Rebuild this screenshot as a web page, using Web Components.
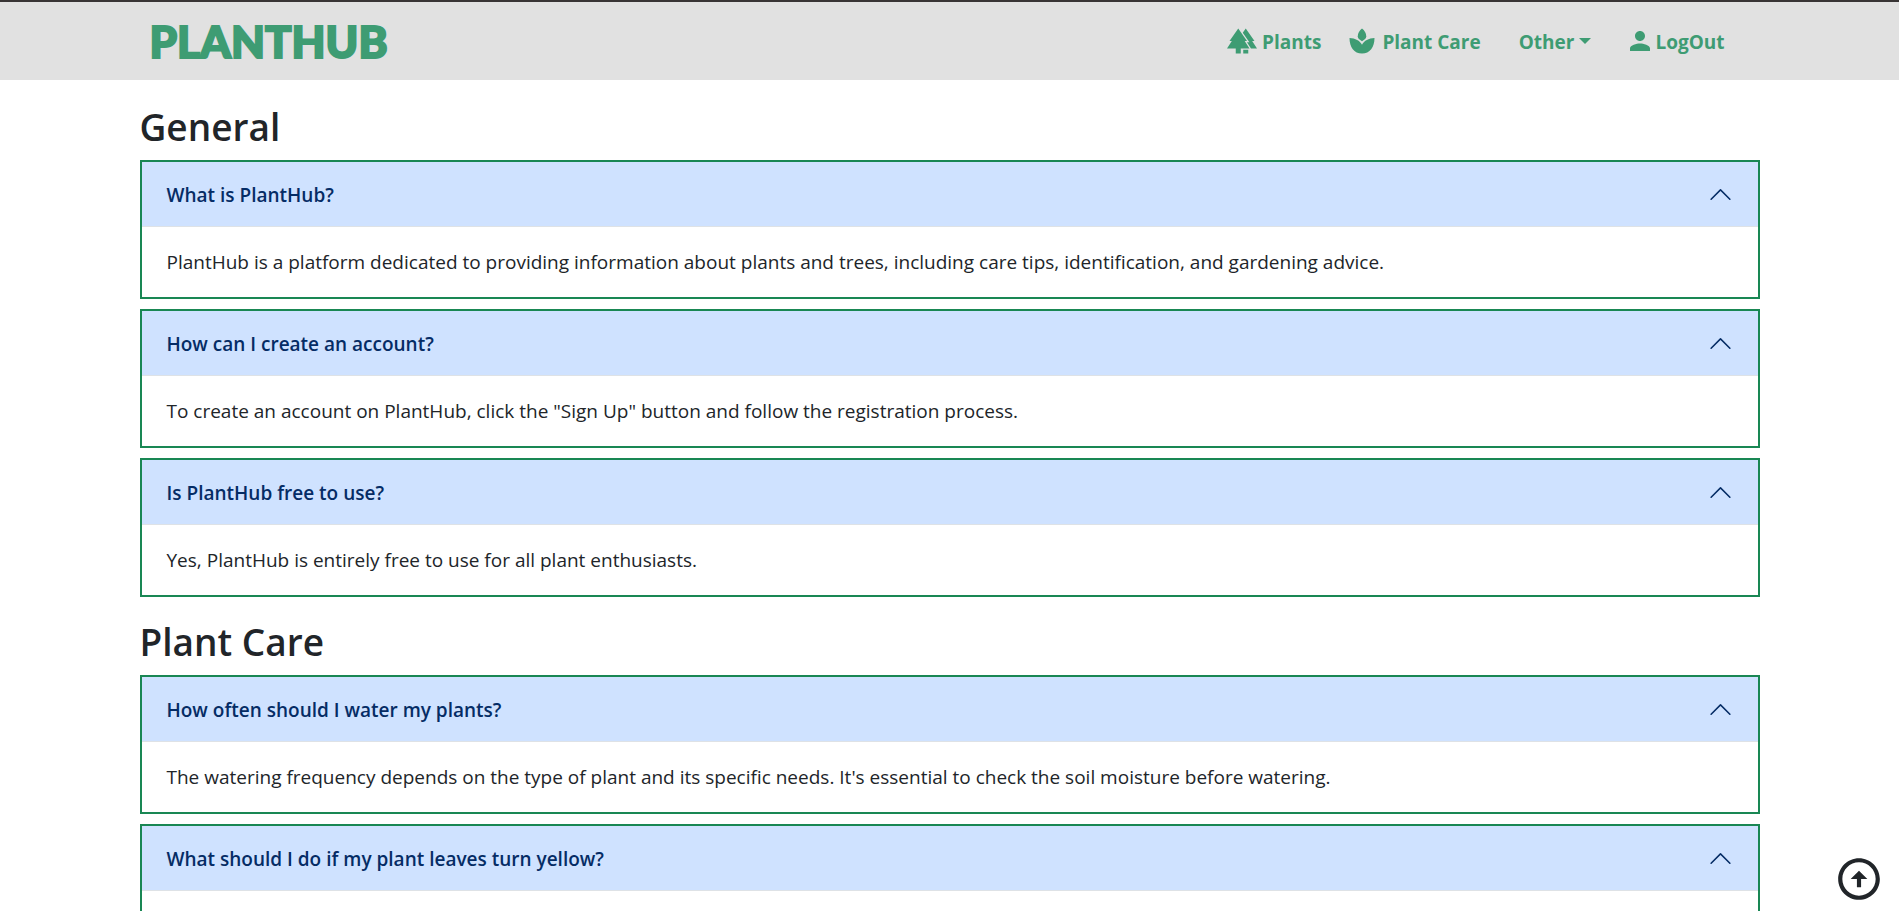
<!DOCTYPE html>
<html lang="en">
<head>
<meta charset="utf-8">
<meta name="viewport" content="width=device-width, initial-scale=1">
<title>PlantHub FAQ</title>
<style>
  body { margin: 0; background: #fff; color: #212529; font: 19px/30px "Open Sans", "Noto Sans", sans-serif; }
  main { max-width: 1620px; margin: 0 auto; padding-top: 22px; }
</style>
</head>
<body>
<plant-navbar></plant-navbar>
<main>
  <faq-section heading="General">
    <faq-item question="What is PlantHub?">PlantHub is a platform dedicated to providing information about plants and trees, including care tips, identification, and gardening advice.</faq-item>
    <faq-item question="How can I create an account?">To create an account on PlantHub, click the "Sign Up" button and follow the registration process.</faq-item>
    <faq-item question="Is PlantHub free to use?">Yes, PlantHub is entirely free to use for all plant enthusiasts.</faq-item>
  </faq-section>
  <faq-section heading="Plant Care">
    <faq-item question="How often should I water my plants?">The watering frequency depends on the type of plant and its specific needs. It's essential to check the soil moisture before watering.</faq-item>
    <faq-item question="What should I do if my plant leaves turn yellow?"></faq-item>
  </faq-section>
</main>
<back-to-top></back-to-top>

<script>
  class ShadowElement extends HTMLElement {
    constructor() {
      super();
      this.attachShadow({ mode: "open" }).innerHTML = this.constructor.markup;
    }
  }

  customElements.define("plant-navbar", class extends ShadowElement {
    static markup = `
      <style>
        :host { display: block; background: #e1e1e1; border-top: 2px solid #383435; }
        nav { max-width: 1600px; min-height: 78px; margin: 0 auto; display: flex; align-items: center; justify-content: space-between; }
        .brand { color: #3e9c73; text-decoration: none; font: 900 44px/60px Lato, sans-serif; -webkit-text-stroke: 2px #3e9c73; }
        ul { display: flex; align-items: center; list-style: none; margin: 0; padding: 0 25px 0 0; }
        li { display: flex; }
        .care { margin-left: 26px; }
        .other { margin-left: 38px; }
        .account { margin-left: 34px; }
      </style>
      <nav aria-label="Main">
        <a class="brand" href="#">PLANTHUB</a>
        <ul>
          <li><nav-link><svg slot="icon" width="30" height="30" viewBox="0 0 24 24" fill="currentColor" aria-hidden="true"><path d="M16 12 9 2 2 12h1.860L0 18h7v4h4v-4h7l-3.860-6z"/><path d="M20.140 12H22L15 2l-2.390 3.410L17.920 13h-1.950l3.220 5H24zM13 19h4v3h-4z"/></svg>Plants</nav-link></li>
          <li class="care"><nav-link><svg slot="icon" width="30" height="30" viewBox="0 0 24 24" fill="currentColor" aria-hidden="true"><path d="M12 2c2 1.500 3.400 3.800 3.400 6.200 0 1.600-1.300 2.800-3.400 4-2.100-1.200-3.400-2.400-3.400-4C8.600 5.800 10 3.500 12 2z"/><path d="M2 9.500c4.700.2 8.200 2 10 5.500 1.800-3.500 5.300-5.300 10-5.500 0 7.200-3.700 12.500-10 12.500S2 16.700 2 9.500z"/></svg>Plant Care</nav-link></li>
          <li class="other"><nav-link>Other<svg slot="caret" width="12" height="6" viewBox="0 0 12 6" fill="currentColor" aria-hidden="true"><path d="M0 0h12L6 6z"/></svg></nav-link></li>
          <li class="account"><nav-link tight><svg slot="icon" width="30" height="30" viewBox="0 0 24 24" fill="currentColor" aria-hidden="true"><path d="M12 12c2.210 0 4-1.790 4-4s-1.790-4-4-4-4 1.790-4 4 1.790 4 4 4zm0 2c-2.670 0-8 1.340-8 4v2h16v-2c0-2.660-5.330-4-8-4z"/></svg>LogOut</nav-link></li>
        </ul>
      </nav>`;
  });

  customElements.define("nav-link", class extends ShadowElement {
    static markup = `
      <style>
        :host { display: block; }
        a { display: flex; align-items: center; gap: 5px; color: #3e9c73; text-decoration: none; font-weight: 700; font-size: 19px; line-height: 30px; }
        span { padding-top: 2px; }
        :host([tight]) a { gap: 0; }
      </style>
      <a href="#"><slot name="icon"></slot><span><slot></slot></span><slot name="caret"></slot></a>`;
  });

  customElements.define("faq-section", class extends ShadowElement {
    static markup = `
      <style>
        :host { display: block; margin-bottom: 20px; }
        h2 { margin: 0 0 8px; font-size: 37px; line-height: 50px; font-weight: 600; }
        .items { display: grid; gap: 10px; }
      </style>
      <section><h2></h2><div class="items"><slot></slot></div></section>`;
    connectedCallback() {
      this.shadowRoot.querySelector("h2").textContent = this.getAttribute("heading");
    }
  });

  customElements.define("faq-item", class extends ShadowElement {
    static markup = `
      <style>
        :host { display: block; border: 2px solid #198754; background: #fff; }
        h3 { margin: 0; font: inherit; }
        button { display: flex; align-items: center; justify-content: space-between; width: 100%; padding: 16px 25px; border: 0; border-bottom: 1px solid #dee2e6; background: #cfe2ff; color: #052c65; font: inherit; font-weight: 600; text-align: left; cursor: pointer; }
        span { padding-top: 2px; }
        button[aria-expanded="false"] svg { transform: rotate(180deg); }
        .answer { padding: 20px 25px; min-height: 30px; }
      </style>
      <h3><button type="button" aria-expanded="true" aria-controls="answer"><span></span><svg width="25" height="25" viewBox="0 0 16 16" fill="currentColor" aria-hidden="true"><path fill-rule="evenodd" d="M14.354 11.354a.5.5 0 0 1-.708 0L8 5.707l-5.646 5.647a.5.5 0 0 1-.708-.708l6-6a.5.5 0 0 1 .708 0l6 6a.5.5 0 0 1 0 .708z"/></svg></button></h3>
      <div class="answer" id="answer"><slot></slot></div>`;
    connectedCallback() {
      const button = this.shadowRoot.querySelector("button");
      this.shadowRoot.querySelector("span").textContent = this.getAttribute("question");
      button.onclick = () => {
        const open = button.getAttribute("aria-expanded") === "true";
        button.setAttribute("aria-expanded", String(!open));
        this.shadowRoot.getElementById("answer").hidden = open;
      };
    }
  });

  customElements.define("back-to-top", class extends ShadowElement {
    static markup = `
      <style>
        :host { display: block; position: fixed; right: 15px; bottom: 7px; }
        button { display: block; padding: 0; border: 0; background: none; color: #212529; cursor: pointer; }
        svg { display: block; }
      </style>
      <button type="button" aria-label="Back to top"><svg width="50" height="50" viewBox="0 0 24 24" fill="currentColor" aria-hidden="true"><path d="M12 20c-4.410 0-8-3.590-8-8s3.590-8 8-8 8 3.590 8 8-3.590 8-8 8m0 2c5.520 0 10-4.480 10-10S17.520 2 12 2 2 6.480 2 12s4.480 10 10 10zM11 12v4h2v-4h3l-4-4-4 4h3z"/></svg></button>`;
    connectedCallback() {
      this.shadowRoot.querySelector("button").onclick = () => scrollTo({ top: 0, behavior: "smooth" });
    }
  });
</script>
</body>
</html>
